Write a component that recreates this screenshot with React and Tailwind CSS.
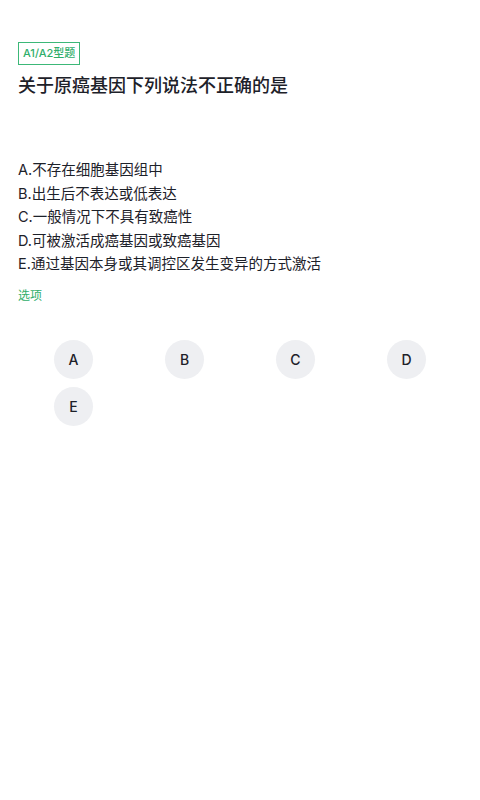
const options = [
  'A.不存在细胞基因组中',
  'B.出生后不表达或低表达',
  'C.一般情况下不具有致癌性',
  'D.可被激活成癌基因或致癌基因',
  'E.通过基因本身或其调控区发生变异的方式激活',
]

const letters = ['A', 'B', 'C', 'D', 'E']

export default function App() {
  return (
    <div
      className="min-h-screen bg-white text-[#1d2129] px-[18px] pt-[39px]"
      style={{ fontFamily: 'Inter, "Noto Sans CJK SC", sans-serif' }}
    >
      <span className="inline-flex items-center h-[23px] px-[4px] border-[1.5px] border-[#3cb878] text-[#2fae6b] text-[11px] leading-none font-medium">
        A1/A2型题
      </span>

      <h1 className="mt-[8px] text-[18px] leading-[26px] font-medium">
        关于原癌基因下列说法不正确的是
      </h1>

      <div className="mt-[59px] flex flex-col">
        {options.map((o) => (
          <div key={o} className="text-[14.5px] leading-[23.5px]">
            {o}
          </div>
        ))}
      </div>

      <div className="mt-[12px] text-[12px] leading-[16px] text-[#2fae6b]">选项</div>

      <div className="mt-[36px] grid grid-cols-4 gap-y-[8px]">
        {letters.map((l) => (
          <div key={l} className="flex justify-center">
            <button className="w-[39px] h-[39px] rounded-full bg-[#eeeff2] flex items-center justify-center text-[14px] font-medium text-[#1d2129]">
              {l}
            </button>
          </div>
        ))}
      </div>
    </div>
  )
}
